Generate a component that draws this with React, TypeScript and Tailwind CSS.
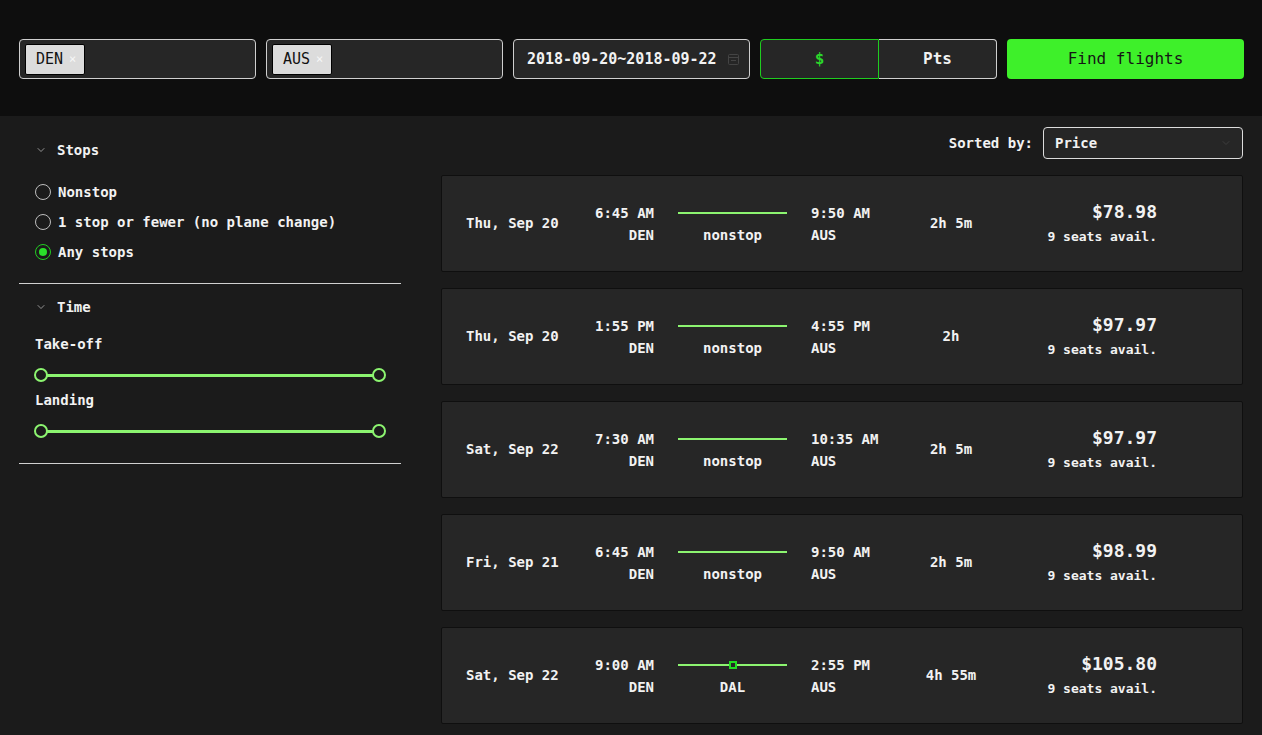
import { ChevronDown } from "lucide-react"

const flights = [
  { date: "Thu, Sep 20", dep: "6:45 AM", arr: "9:50 AM", stop: "nonstop", dur: "2h 5m", price: "$78.98" },
  { date: "Thu, Sep 20", dep: "1:55 PM", arr: "4:55 PM", stop: "nonstop", dur: "2h", price: "$97.97" },
  { date: "Sat, Sep 22", dep: "7:30 AM", arr: "10:35 AM", stop: "nonstop", dur: "2h 5m", price: "$97.97" },
  { date: "Fri, Sep 21", dep: "6:45 AM", arr: "9:50 AM", stop: "nonstop", dur: "2h 5m", price: "$98.99" },
  { date: "Sat, Sep 22", dep: "9:00 AM", arr: "2:55 PM", stop: "DAL", dur: "4h 55m", price: "$105.80" },
]

export default function App() {
  return (
    <div className="min-h-screen bg-[#1b1b1b] text-[#f2f2f2] font-['DejaVu_Sans_Mono',monospace]">
      <SearchBar />
      <div className="flex gap-[40px] px-[19px]">
        <Filters />
        <Results />
      </div>
    </div>
  )
}

function SearchBar() {
  return (
    <header className="flex h-[116px] items-start gap-[10px] bg-[#0e0e0e] px-[19px] pt-[39px]">
      <AirportInput code="DEN" />
      <AirportInput code="AUS" />
      <div className="flex h-[40px] w-[237px] shrink-0 items-center justify-between rounded-[4px] border border-[#cfcfcf] bg-[#262626] pl-[13px] pr-[10px]">
        <span className="whitespace-nowrap text-[15px] font-bold">2018-09-20~2018-09-22</span>
        <CalendarIcon />
      </div>
      <div className="flex h-[40px] w-[237px] shrink-0">
        <div className="flex flex-1 items-center justify-center rounded-l-[4px] border border-[#1fcc1f] bg-[#262626] text-[16px] font-bold text-[#2bd62b]">
          $
        </div>
        <div className="flex flex-1 items-center justify-center rounded-r-[4px] border border-l-0 border-[#cfcfcf] bg-[#262626] text-[16px] font-bold">
          Pts
        </div>
      </div>
      <button className="h-[40px] w-[237px] shrink-0 rounded-[4px] bg-[#3ef02a] text-[16px] text-[#151515]">
        Find flights
      </button>
    </header>
  )
}

function AirportInput({ code }: { code: string }) {
  return (
    <div className="flex h-[40px] w-[237px] shrink-0 items-center rounded-[4px] border border-[#cfcfcf] bg-[#262626] px-[5px]">
      <span className="flex h-[31px] w-[60px] items-center gap-[6px] rounded-[2px] border border-black bg-[#dcdcdc] pl-[10px] text-[15px] text-[#111]">
        {code}
        <span className="text-[12px] text-[#f7f7f7]">×</span>
      </span>
    </div>
  )
}

function CalendarIcon() {
  return (
    <svg width="11" height="12" viewBox="0 0 11 12" fill="none" stroke="#444" strokeWidth="1">
      <rect x="0.5" y="1.5" width="10" height="10" rx="1" />
      <line x1="0.5" y1="4.5" x2="10.5" y2="4.5" />
      <line x1="3" y1="7.5" x2="8" y2="7.5" />
    </svg>
  )
}

function Filters() {
  return (
    <aside className="w-[382px] shrink-0 text-[14px] font-bold">
      <section className="border-b border-[#d0d0d0] pb-[16px] pt-[24px]">
        <SectionTitle title="Stops" />
        <div className="mt-[17px] px-[16px]">
          <Radio label="Nonstop" />
          <Radio label="1 stop or fewer (no plane change)" />
          <Radio label="Any stops" checked />
        </div>
      </section>
      <section className="border-b border-[#d0d0d0] pb-[22px] pt-[13px]">
        <SectionTitle title="Time" />
        <div className="mt-[17px] px-[16px]">
          <div className="leading-[20px]">Take-off</div>
          <RangeSlider />
          <div className="mt-[5px] leading-[20px]">Landing</div>
          <RangeSlider />
        </div>
      </section>
    </aside>
  )
}

function SectionTitle({ title }: { title: string }) {
  return (
    <div className="flex h-[20px] items-center gap-[10px] pl-[16px]">
      <ChevronDown size={12} strokeWidth={1.5} className="text-[#bbb]" />
      <span>{title}</span>
    </div>
  )
}

function Radio({ label, checked = false }: { label: string; checked?: boolean }) {
  return (
    <div className="flex h-[30px] items-center gap-[7px]">
      <span
        className={
          checked
            ? "flex h-[16px] w-[16px] items-center justify-center rounded-full border-[1.5px] border-[#22cc22]"
            : "h-[16px] w-[16px] rounded-full border-[1.5px] border-[#bdbdbd]"
        }
      >
        {checked && <span className="h-[8px] w-[8px] rounded-full bg-[#2ae02a]" />}
      </span>
      <span>{label}</span>
    </div>
  )
}

function RangeSlider() {
  return (
    <div className="relative mt-[11px] h-[20px] w-[352px] -ml-px">
      <div className="absolute left-[7px] right-[7px] top-[8.5px] h-[3px] bg-[#8cf470]" />
      <span className="absolute left-0 top-[3px] h-[14px] w-[14px] rounded-full border-2 border-[#8cf470] bg-[#1b1b1b]" />
      <span className="absolute right-0 top-[3px] h-[14px] w-[14px] rounded-full border-2 border-[#8cf470] bg-[#1b1b1b]" />
    </div>
  )
}

function Results() {
  return (
    <main className="flex-1 pt-[11px]">
      <div className="flex items-center justify-end gap-[10px]">
        <span className="text-[14px] font-bold">Sorted by:</span>
        <div className="flex h-[32px] w-[200px] items-center justify-between rounded-[4px] border border-[#dcdcdc] bg-[#262626] pl-[11px] pr-[10px]">
          <span className="text-[14px] font-bold">Price</span>
          <ChevronDown size={12} strokeWidth={1.5} className="text-[#444]" />
        </div>
      </div>
      <div className="mt-[16px] flex flex-col gap-[16px]">
        {flights.map((f, i) => (
          <FlightCard key={i} {...f} />
        ))}
      </div>
    </main>
  )
}

function FlightCard(f: (typeof flights)[number]) {
  const hasStop = f.stop !== "nonstop"
  return (
    <div className="flex h-[97px] items-center rounded-[2px] border border-[#0f0f0f] bg-[#262626] pl-[24px] text-[14px] font-bold">
      <div className="w-[110px]">{f.date}</div>
      <div className="w-[78px] text-right leading-[22px]">
        <div>{f.dep}</div>
        <div>DEN</div>
      </div>
      <div className="ml-[24px] w-[109px] text-center leading-[22px]">
        <div className="relative flex h-[22px] items-center">
          <div className="h-[2px] w-full bg-[#8cf470]" />
          {hasStop && (
            <span className="absolute left-1/2 top-1/2 h-[8px] w-[8px] -translate-x-1/2 -translate-y-1/2 border-2 border-[#22dd22] bg-[#262626]" />
          )}
        </div>
        <div>{f.stop}</div>
      </div>
      <div className="ml-[24px] w-[100px] leading-[22px]">
        <div>{f.arr}</div>
        <div>AUS</div>
      </div>
      <div className="w-[80px] text-center">{f.dur}</div>
      <div className="w-[166px] text-right">
        <div className="text-[18px] leading-[24px]">{f.price}</div>
        <div className="mt-[3px] text-[13px] leading-[20px]">9 seats avail.</div>
      </div>
    </div>
  )
}
